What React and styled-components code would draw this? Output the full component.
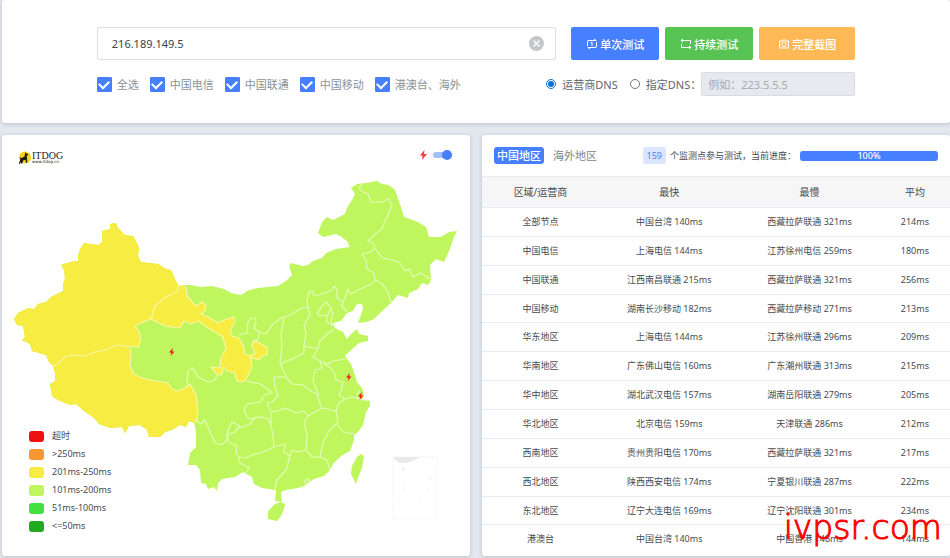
import React, { useState } from "react";
import styled, { createGlobalStyle } from "styled-components";
import { RiRepeatLine, RiRepeatOneLine, RiCameraLine } from "react-icons/ri";

const CARRIERS = ["全选", "中国电信", "中国联通", "中国移动", "港澳台、海外"];

const ROWS = [
  ["全部节点", "中国台湾 140ms", "西藏拉萨联通 321ms", "214ms"],
  ["中国电信", "上海电信 144ms", "江苏徐州电信 259ms", "180ms"],
  ["中国联通", "江西南昌联通 215ms", "西藏拉萨联通 321ms", "256ms"],
  ["中国移动", "湖南长沙移动 182ms", "西藏拉萨移动 271ms", "213ms"],
  ["华东地区", "上海电信 144ms", "江苏徐州联通 296ms", "209ms"],
  ["华南地区", "广东佛山电信 160ms", "广东潮州联通 313ms", "215ms"],
  ["华中地区", "湖北武汉电信 157ms", "湖南岳阳联通 279ms", "205ms"],
  ["华北地区", "北京电信 159ms", "天津联通 286ms", "212ms"],
  ["西南地区", "贵州贵阳电信 170ms", "西藏拉萨联通 321ms", "217ms"],
  ["西北地区", "陕西西安电信 174ms", "宁夏银川联通 287ms", "222ms"],
  ["东北地区", "辽宁大连电信 169ms", "辽宁沈阳联通 301ms", "234ms"],
  ["港澳台", "中国台湾 140ms", "中国香港 148ms", "144ms"],
];

const LEGEND = [
  ["#ec1212", "超时"],
  ["#f79733", ">250ms"],
  ["#f6ec42", "201ms-250ms"],
  ["#bff65e", "101ms-200ms"],
  ["#42e041", "51ms-100ms"],
  ["#22aa1f", "<=50ms"],
];

const MAINLAND =
  "110,224 116,223 118,228 125,235 133,236 137,243 139,248 138,256 141,262 158,264 166,269 171,270 175,279 178,285 190,285 201,287 212,286 224,289 231,293 235,294 241,295 249,290 258,288 278,286 286,281 292,275 289,266 291,263 303,266 308,265 313,261 322,258 326,253 336,249 350,247 347,241 340,236 336,234 323,237 318,233 322,222 327,217 333,220 345,214 347,208 352,200 355,194 351,188 357,184 366,183 377,181 382,184 389,185 395,190 400,204 404,217 410,219 418,222 426,227 429,237 441,237 449,232 457,231 454,237 449,251 444,262 436,259 430,265 431,280 428,285 422,283 418,289 409,293 408,298 398,295 391,303 380,313 374,319 367,322 358,323 363,309 362,304 357,304 353,311 347,313 341,321 333,323 335,328 343,332 347,339 351,334 357,329 359,334 368,336 368,341 359,343 351,350 345,356 347,359 351,364 354,372 357,382 362,388 364,395 362,400 370,401 370,406 366,412 363,425 358,432 354,435 354,440 350,451 341,456 333,464 330,470 324,476 314,479 304,486 298,488 286,490 281,492 282,502 275,501 276,490 262,488 254,484 252,477 243,472 235,477 228,478 222,479 218,483 217,491 214,487 208,489 206,484 201,483 200,470 196,465 188,465 190,453 196,447 196,431 194,423 189,421 186,427 180,425 172,430 165,432 160,437 149,437 147,430 140,425 129,426 125,433 122,427 110,428 99,424 94,418 84,411 76,404 70,405 58,400 52,396 50,384 55,381 55,373 53,366 49,362 46,355 32,351 30,344 22,340 25,337 23,326 17,325 14,319 18,313 28,308 34,309 38,304 46,302 51,297 63,291 63,284 65,278 64,270 61,265 70,262 78,261 78,256 80,249 84,243 98,245 102,242 102,231 110,229";

const XINJIANG =
  "110,224 116,223 118,228 125,235 133,236 137,243 139,248 138,256 141,262 158,264 166,269 171,270 175,279 178,285 178,291 166,297 160,302 155,306 151,319 143,322 135,326 139,332 141,339 138,347 125,346 116,345 106,350 95,352 85,356 73,355 65,357 58,364 53,366 49,362 46,355 32,351 30,344 22,340 25,337 23,326 17,325 14,319 18,313 28,308 34,309 38,304 46,302 51,297 63,291 63,284 65,278 64,270 61,265 70,262 78,261 78,256 80,249 84,243 98,245 102,242 102,231 110,229";

const TIBET =
  "53,366 58,364 65,357 73,355 85,356 95,352 106,350 116,345 125,346 130,348 131,353 130,365 133,373 139,377 150,380 168,383 172,389 178,391 185,388 190,384 196,395 198,412 196,423 189,421 186,427 180,425 172,430 165,432 160,437 149,437 147,430 140,425 129,426 125,433 122,427 110,428 99,424 94,418 84,411 76,404 70,405 58,400 52,396 50,384 55,381 55,373";

const GANSU =
  "178,285 186,287 187,296 196,306 202,302 206,305 205,311 201,314 210,318 218,323 224,320 234,317 235,322 230,331 232,336 239,338 243,345 245,354 251,356 255,353 252,345 254,340 261,344 267,347 267,355 262,356 259,360 250,357 252,365 250,372 246,379 242,382 237,381 235,373 227,371 224,367 221,375 217,374 211,367 220,368 221,358 226,349 223,337 210,329 198,321 191,324 184,321 180,328 165,326 151,319 155,306 160,302 166,297 178,291";

// province borders that are not already an edge of a filled region
const BORDERS = [
  "239,335 247,333 248,322 251,318 255,318 256,323 254,328 259,332 266,334 272,325 281,318 290,315 300,309 308,307 307,300 309,292 313,291 314,296 325,293 332,290 334,286 337,290 337,298 343,302 345,298 348,289 351,294 360,289 372,284 375,280",
  "259,332 258,339 252,343",
  "375,280 374,273 367,269 366,260 362,254 371,252",
  "375,247 373,243 368,241 375,234 382,229 384,223 388,215 392,205 388,199 382,202 371,202 368,194 361,191 359,188 362,184",
  "371,252 374,248 378,252 382,258 392,260 400,263 405,271 409,269 413,277 420,273 424,275 430,279",
  "375,280 381,283 387,290 389,296 391,302",
  "343,302 342,306 347,312",
  "284,317 281,335 282,345 280,362 284,372 288,380 292,384 303,385 311,391 317,394 321,407",
  "308,307 310,315 304,325 306,333 304,346 304,353 292,359 280,364",
  "304,346 318,349 320,341 328,333 334,330",
  "317,314 322,306 326,302 331,308 328,315 320,316 317,314",
  "330,309 333,313 331,322 333,326 327,322 327,315",
  "318,349 313,357 322,362 328,364 333,361 345,359",
  "320,361 322,368 315,370 313,380 316,389 319,395",
  "324,364 331,368 335,374 336,380 343,382 341,391 339,395 345,399 352,397 358,399 362,400",
  "358,399 357,394 360,391",
  "286,377 274,377 275,387 278,396 272,402 267,403 270,410 275,412 285,408 296,413 304,411 308,416 322,408 336,411 339,403 345,399",
  "246,381 260,384 268,389 272,393 265,395 260,402 247,404 244,411 249,419 262,417 268,419 271,425",
  "188,371 187,383 190,386",
  "188,371 193,368 198,377 208,382 215,380 217,375",
  "271,412 271,425 273,435 274,447 263,452 252,455 245,458 239,457 240,463 249,468 246,473",
  "308,416 304,422 307,435 306,450 298,452 292,450 290,456 284,452 285,444 274,447",
  "336,411 338,423 330,429 323,443 320,457",
  "306,450 312,457 320,457 327,460 330,470",
  "338,425 343,432 354,434",
  "290,456 286,470 277,480 275,489",
  "196,420 201,424 205,420 211,434 215,443 222,445 227,440 228,430 232,422 240,426 235,432 226,435 230,443 237,446 236,453 240,458",
  "240,428 250,424 256,417 262,418",
  "304,482 307,479 310,481 307,484 304,482",
];

const BOLTS = [
  [172, 352],
  [349, 377],
  [361, 396],
];

const ChinaMap = () => (
  <MapSvg viewBox="14 180 444 343" role="img" aria-label="中国地图">
    <g fill="#bff65e">
      <polygon points={MAINLAND} />
      <polygon points="275,504 281,502 285,504 284,509 281,516 277,521 268,519 268,511" />
      <polygon points="361,454 364,456 362,468 358,478 356,484 351,474 352,466 357,457" />
    </g>
    <g fill="#f6ec42">
      <polygon points={XINJIANG} />
      <polygon points={TIBET} />
      <polygon
        points={GANSU}
        stroke="#f9f6a4"
        strokeWidth="1.2"
        strokeLinejoin="round"
      />
    </g>
    <g fill="none" stroke="#f9f6a4" strokeWidth="1.2" strokeLinejoin="round">
      <polyline points="151,319 143,322 135,326 139,332 141,339 138,347 125,346 116,345 106,350 95,352 85,356 73,355 65,357 58,364 53,366" />
      <polyline points="130,348 131,353 130,365 133,373 139,377 150,380 168,383 172,389 178,391 185,388 190,384 196,395 198,412 196,423" />
    </g>
    <g fill="none" stroke="#e4fbb8" strokeWidth="1.2" strokeLinejoin="round">
      {BORDERS.map((line) => (
        <polyline key={line} points={line} />
      ))}
    </g>
    <g fill="#ec1212">
      {BOLTS.map(([x, y]) => (
        <path
          key={x}
          d={`M${x + 1} ${y - 4}l-4 4.500h2.500l-1 3.500 4-4.500h-2.500z`}
        />
      ))}
    </g>
    <g fill="none" stroke="#f8f8f8">
      <rect x="393" y="457" width="44" height="62" />
      <path
        fill="#e9e9e9"
        stroke="none"
        d="M394 457h27l-14 6h-8l-5-4zM402 469l3-2-1 3-2 1z"
      />
      <path
        stroke="#f0f0f0"
        d="M432 456v3M430 477v3M428 488v2M404 487v3M398 500v3M419 503l2-1"
      />
    </g>
  </MapSvg>
);

const Bolt = () => (
  <svg width="7" height="10" viewBox="0 0 7 10" aria-hidden="true">
    <path d="M4.500 0L0 5.500h2.600L2 10l5-6H4z" fill="#f23a3a" />
  </svg>
);

const Logo = () => (
  <LogoBox>
    <svg width="14" height="14" viewBox="0 0 14 14" aria-hidden="true">
      <circle cx="7" cy="6.500" r="6" fill="#f8d413" />
      <path
        d="M7.300 1l.8 1.300 2.200.9-.4 1-1.200.4.300 3 .3 4.200H8l-.5-3-2.500.6-.6 3.100H2.700l.3-1.600L1.500 13l-.7-.5 1.600-4-.7-2L3.500 7l3-1.500z"
        fill="#1c1a12"
      />
    </svg>
    <LogoText>
      <LogoName>ITDOG</LogoName>
      <LogoUrl>www.itdog.cn</LogoUrl>
    </LogoText>
  </LogoBox>
);

const App = () => {
  const [host, setHost] = useState("216.189.149.5");
  const [dns, setDns] = useState("isp");
  const [region, setRegion] = useState("cn");
  const progress = 100;

  return (
    <Page>
      <GlobalStyle />
      <SearchCard>
        <SearchForm onSubmit={(e) => e.preventDefault()}>
          <FormRow>
            <HostBox>
              <HostInput
                aria-label="域名或IP"
                value={host}
                onChange={(e) => setHost(e.target.value)}
              />
              <ClearButton
                type="button"
                aria-label="清空"
                onClick={() => setHost("")}
              >
                <svg width="15" height="15" viewBox="0 0 15 15">
                  <circle cx="7.500" cy="7.500" r="7.500" fill="#c4c6c9" />
                  <path
                    d="M4.500 4.500l6 6M10.500 4.500l-6 6"
                    stroke="#fff"
                    strokeWidth="1.300"
                  />
                </svg>
              </ClearButton>
            </HostBox>
            <Buttons>
              <ActionButton type="submit" $color="#467fff">
                <RiRepeatOneLine size={12} />
                单次测试
              </ActionButton>
              <ActionButton type="button" $color="#56c352">
                <RiRepeatLine size={12} />
                持续测试
              </ActionButton>
              <ActionButton type="button" $color="#ffb856" $wide>
                <RiCameraLine size={12} />
                完整截图
              </ActionButton>
            </Buttons>
          </FormRow>
          <FormRow>
            <Checks>
              {CARRIERS.map((name) => (
                <CheckLabel key={name}>
                  <CheckBox type="checkbox" defaultChecked />
                  {name}
                </CheckLabel>
              ))}
            </Checks>
            <DnsGroup>
              <RadioLabel>
                <Radio
                  type="radio"
                  name="dns"
                  checked={dns === "isp"}
                  onChange={() => setDns("isp")}
                />
                运营商DNS
              </RadioLabel>
              <RadioLabel>
                <Radio
                  type="radio"
                  name="dns"
                  checked={dns === "custom"}
                  onChange={() => setDns("custom")}
                />
                指定DNS：
              </RadioLabel>
              <DnsInput
                aria-label="指定DNS"
                placeholder="例如：223.5.5.5"
                disabled={dns === "isp"}
              />
            </DnsGroup>
          </FormRow>
        </SearchForm>
      </SearchCard>

      <Panels>
        <MapCard>
          <MapHeader>
            <Logo />
            <SwitchLabel>
              <Bolt />
              <Switch
                type="checkbox"
                role="switch"
                aria-label="最快节点"
                defaultChecked
              />
            </SwitchLabel>
          </MapHeader>
          <ChinaMap />
          <Legend>
            {LEGEND.map(([color, text]) => (
              <LegendItem key={text}>
                <Swatch $color={color} />
                {text}
              </LegendItem>
            ))}
          </Legend>
        </MapCard>

        <TableCard>
          <TableHeader>
            <Tabs>
              <Tab $active={region === "cn"} onClick={() => setRegion("cn")}>
                中国地区
              </Tab>
              <Tab $active={region === "sea"} onClick={() => setRegion("sea")}>
                海外地区
              </Tab>
            </Tabs>
            <Status>
              <Badge>159</Badge>
              个监测点参与测试，当前进度：
            </Status>
            <Track>
              <Bar style={{ width: `${progress}%` }}>{progress}%</Bar>
            </Track>
          </TableHeader>
          <Table>
            <thead>
              <tr>
                <Th $width="25%">区域/运营商</Th>
                <Th $width="30%">最快</Th>
                <Th $width="30%">最慢</Th>
                <Th $width="15%">平均</Th>
              </tr>
            </thead>
            <tbody>
              {ROWS.map((row) => (
                <tr key={row[0]}>
                  {row.map((cell, i) => (
                    <Td key={i}>{cell}</Td>
                  ))}
                </tr>
              ))}
            </tbody>
          </Table>
          <Watermark>ivpsr.com</Watermark>
        </TableCard>
      </Panels>
    </Page>
  );
};

export default App;

const GlobalStyle = createGlobalStyle`
  * {
    box-sizing: border-box;
  }

  body {
    margin: 0;
    background: #e3e8ee;
    color: #444b52;
    font-family: "Noto Sans", "Noto Sans CJK SC", sans-serif;
    font-size: 9px;
  }

  button, input {
    margin: 0;
    font-family: inherit;
  }
`;

const Page = styled.main`
  display: flex;
  flex-direction: column;
  gap: 12px;
  padding: 0 0 2px 2px;
`;

const Card = styled.section`
  background: #fff;
  border-radius: 3px;
  box-shadow: 0 1px 4px rgba(60, 80, 100, 0.25);
`;

const SearchCard = styled(Card)`
  padding: 27px 0;
`;

const SearchForm = styled.form`
  display: flex;
  flex-direction: column;
  gap: 12px;
  width: 80%;
  margin: 0 auto;
`;

const FormRow = styled.div`
  display: flex;
  align-items: center;
  justify-content: space-between;
  gap: 15px;
`;

const HostBox = styled.div`
  display: flex;
  flex: 1;
  align-items: center;
  height: 33px;
  padding: 0 11px 0 14px;
  border: 1px solid #dcdfe3;
  border-radius: 2px;
`;

const HostInput = styled.input`
  flex: 1;
  min-width: 0;
  padding: 0;
  border: 0;
  outline: 0;
  color: #3d4349;
  font-size: 11px;
`;

const ClearButton = styled.button`
  display: flex;
  padding: 0;
  border: 0;
  background: none;
  cursor: pointer;
`;

const Buttons = styled.div`
  display: flex;
  gap: 6px;
`;

const ActionButton = styled.button`
  display: flex;
  align-items: center;
  justify-content: center;
  gap: 2px;
  height: 33px;
  padding: 0 ${({ $wide }) => ($wide ? 19 : 15)}px;
  border: 0;
  border-radius: 2px;
  background: ${({ $color }) => $color};
  color: #fff;
  font-size: 11px;
  font-weight: 500;
  cursor: pointer;
`;

const Checks = styled.div`
  display: flex;
  gap: 11px;
`;

const CheckLabel = styled.label`
  display: flex;
  align-items: center;
  gap: 5px;
  color: #8a929b;
  font-size: 11px;
`;

const CheckBox = styled.input`
  display: grid;
  place-items: center;
  width: 15px;
  height: 15px;
  border: 1px solid #467fff;
  border-radius: 1px;
  appearance: none;

  &:checked {
    background: #467fff;
  }

  &:checked::before {
    content: "";
    width: 8px;
    height: 5px;
    border: solid #fff;
    border-width: 0 0 2px 2px;
    transform: translateY(-1px) rotate(-45deg);
  }
`;

const DnsGroup = styled.div`
  display: flex;
  align-items: center;
  gap: 12px;
  margin-left: auto;
`;

const RadioLabel = styled.label`
  display: flex;
  align-items: center;
  gap: 6px;
  color: #5f666d;
  font-size: 11px;

  & + input {
    margin-left: -12px;
  }
`;

const Radio = styled.input`
  display: grid;
  place-items: center;
  width: 10px;
  height: 10px;
  border: 1px solid #767676;
  border-radius: 50%;
  appearance: none;

  &:checked {
    border-color: #0b6fd6;
  }

  &:checked::before {
    content: "";
    width: 6px;
    height: 6px;
    border-radius: 50%;
    background: #0b6fd6;
  }
`;

const DnsInput = styled.input`
  width: 154px;
  height: 24px;
  padding: 0 6px;
  border: 1px solid #d9dce1;
  border-radius: 2px;
  background: #fff;
  font-size: 11px;

  &:disabled {
    background: #e7e9ee;
  }

  &::placeholder {
    color: #a4abb3;
  }
`;

const Panels = styled.div`
  display: grid;
  grid-template-columns: 1fr 1fr;
  gap: 12px;
`;

const MapCard = styled(Card)`
  position: relative;
  padding: 0 12px 33px;
`;

const MapHeader = styled.header`
  display: flex;
  align-items: center;
  justify-content: space-between;
  height: 45px;
  padding: 0 6px 0 4px;
`;

const LogoBox = styled.div`
  display: flex;
  align-items: center;
`;

const LogoText = styled.div`
  display: flex;
  flex-direction: column;
  color: #222;
`;

const LogoName = styled.span`
  font-family: "Liberation Serif", serif;
  font-size: 10px;
  line-height: 9px;
`;

const LogoUrl = styled.span`
  font-family: "DejaVu Sans", sans-serif;
  font-size: 4px;
  line-height: 4px;
`;

const SwitchLabel = styled.label`
  display: flex;
  align-items: center;
  gap: 6px;
  padding-bottom: 6px;
`;

const Switch = styled.input`
  display: flex;
  align-items: center;
  justify-content: flex-start;
  width: 19px;
  height: 6px;
  border-radius: 3px;
  background: #c9ced6;
  appearance: none;

  &::before {
    content: "";
    width: 10px;
    height: 10px;
    flex: none;
    border-radius: 50%;
    background: #8c939c;
  }

  &:checked {
    justify-content: flex-end;
    background: #a3bfff;
  }

  &:checked::before {
    background: #467fff;
  }
`;

const MapSvg = styled.svg`
  display: block;
  width: 100%;
`;

const Legend = styled.ul`
  position: absolute;
  bottom: 21px;
  left: 27px;
  margin: 0;
  padding: 0;
  list-style: none;
`;

const LegendItem = styled.li`
  display: flex;
  align-items: center;
  gap: 8px;
  line-height: 18px;
`;

const Swatch = styled.span`
  width: 15px;
  height: 11px;
  border-radius: 3px;
  background: ${({ $color }) => $color};
`;

const TableCard = styled(Card)`
  position: relative;
`;

const TableHeader = styled.header`
  display: flex;
  align-items: center;
  height: 41px;
  padding: 0 12px;
`;

const Tabs = styled.div`
  display: flex;
  gap: 6px;
`;

const Tab = styled.button`
  height: 17px;
  padding: 0 3px;
  border: 0;
  border-radius: 3px;
  background: ${({ $active }) => ($active ? "#467fff" : "none")};
  color: ${({ $active }) => ($active ? "#fff" : "#7b838c")};
  font-size: 11px;
  font-weight: ${({ $active }) => ($active ? 500 : 400)};
  line-height: 17px;
  cursor: pointer;
`;

const Status = styled.div`
  display: flex;
  align-items: center;
  gap: 4px;
  margin: 0 4px 0 auto;
  white-space: nowrap;
`;

const Badge = styled.span`
  padding: 0 4px;
  border-radius: 2px;
  background: #dae6ff;
  color: #467fff;
  line-height: 17px;
`;

const Track = styled.div`
  width: 138px;
  border-radius: 3px;
  background: #e9ecef;
`;

const Bar = styled.div`
  border-radius: 3px;
  background: #467fff;
  color: #fff;
  font-weight: 500;
  line-height: 10px;
  text-align: center;
`;

const Table = styled.table`
  width: 100%;
  height: 377px;
  border-collapse: collapse;
  table-layout: fixed;
  text-align: center;
`;

const Th = styled.th`
  width: ${({ $width }) => $width};
  height: 31px;
  padding: 0 0 1px;
  border-top: 1px solid #e9ebee;
  background: #f6f6f7;
  font-size: 10px;
  font-weight: 400;
`;

const Td = styled.td`
  padding: 0 0 1px;
  border-top: 1px solid #e9ecf0;
`;

const Watermark = styled.span`
  position: absolute;
  right: 8px;
  bottom: 8px;
  color: #f00;
  font-family: "DejaVu Sans", sans-serif;
  font-size: 33px;
  font-weight: 200;
  line-height: 40px;
  -webkit-text-stroke: 1px #f00;
  pointer-events: none;
`;
